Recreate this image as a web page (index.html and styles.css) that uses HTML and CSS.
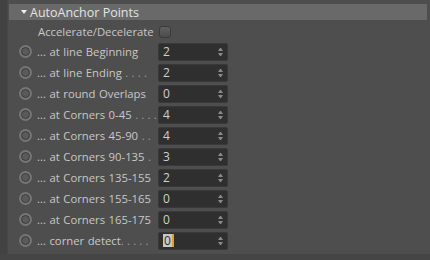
FILE: index.html
```html
<!DOCTYPE html>
<html>
<head>
<meta charset="utf-8">
<link rel="stylesheet" href="styles.css">
</head>
<body>
<div class="frame">
  <div class="leftbar"></div>
  <div class="panel">
    <div class="header"><span class="tri"></span><span class="title">AutoAnchor Points</span></div>
    <div class="accel">
      <span class="accel-label">Accelerate/Decelerate</span>
      <span class="check"></span>
    </div>
    <div class="rows">
      <div class="row"><span class="radio"></span><span class="label">... at line Beginning</span><span class="field"><span class="val">2</span><span class="spin"></span></span></div>
      <div class="row"><span class="radio"></span><span class="label">... at line Ending <span class="dots">. . . .</span></span><span class="field"><span class="val">2</span><span class="spin"></span></span></div>
      <div class="row"><span class="radio"></span><span class="label">... at round Overlaps</span><span class="field"><span class="val">0</span><span class="spin"></span></span></div>
      <div class="row"><span class="radio"></span><span class="label">... at Corners 0-45 <span class="dots">. . . .</span></span><span class="field"><span class="val">4</span><span class="spin"></span></span></div>
      <div class="row"><span class="radio"></span><span class="label">... at Corners 45-90 <span class="dots">. .</span></span><span class="field"><span class="val">4</span><span class="spin"></span></span></div>
      <div class="row"><span class="radio"></span><span class="label">... at Corners 90-135 <span class="dots">.</span></span><span class="field"><span class="val">3</span><span class="spin"></span></span></div>
      <div class="row"><span class="radio"></span><span class="label">... at Corners 135-155</span><span class="field"><span class="val">2</span><span class="spin"></span></span></div>
      <div class="row"><span class="radio"></span><span class="label">... at Corners 155-165</span><span class="field"><span class="val">0</span><span class="spin"></span></span></div>
      <div class="row"><span class="radio"></span><span class="label">... at Corners 165-175</span><span class="field"><span class="val">0</span><span class="spin"></span></span></div>
      <div class="row"><span class="radio"></span><span class="label">... corner detect<span class="dots">. . . . .</span></span><span class="field"><span class="val sel">0</span><span class="spin"></span></span></div>
    </div>
  </div>
</div>
<div class="bottom"></div>
</body>
</html>
```
FILE: styles.css
```css
html, body {
  margin: 0;
  padding: 0;
}
body {
  width: 430px;
  height: 260px;
  background: #4e4e4e;
  font-family: "Open Sans", "Liberation Sans", sans-serif;
  font-size: 11px;
  color: #c8c8c8;
  overflow: hidden;
  display: flex;
  flex-direction: column;
}
.frame {
  display: flex;
  height: 254px;
}
.leftbar {
  width: 7px;
  background: #424242;
  border-right: 1px solid #474747;
}
.panel {
  flex: 1;
  padding-top: 4px;
}
.header {
  height: 16px;
  margin: 0 3px 0 1px;
  background: #696969;
  display: flex;
  align-items: center;
  padding-left: 12px;
  gap: 3px;
  color: #e4e4e4;
  font-size: 12.5px;
  font-weight: 500;
}
.tri {
  width: 0;
  height: 0;
  border-left: 3.5px solid transparent;
  border-right: 3.5px solid transparent;
  border-top: 4px solid #f0f0f0;
}
.accel {
  height: 19px;
  margin-top: 2px;
  display: flex;
  align-items: center;
  padding-left: 30px;
  gap: 6px;
  font-size: 11.3px;
}
.accel-label {
  width: 115px;
}
.check {
  width: 10px;
  height: 10px;
  border-radius: 3px;
  background: linear-gradient(#606060, #4c4c4c);
  border: 1px solid #3a3a3a;
}
.rows {
  display: flex;
  flex-direction: column;
}
.row {
  height: 21px;
  display: grid;
  grid-template-columns: 13px 116px 70px;
  column-gap: 5px;
  align-items: center;
  padding-left: 11px;
}
.radio {
  width: 13px;
  height: 13px;
  border-radius: 50%;
  background: #767676;
  display: flex;
  align-items: center;
  justify-content: center;
}
.radio::after {
  content: "";
  width: 7px;
  height: 7px;
  border-radius: 50%;
  background: #5a5a5a;
  border: 1px solid #3c3c3c;
}
.label {
  white-space: nowrap;
  font-size: 11.3px;
  word-spacing: 0.6px;
}
.dots {
  color: #9c9c9c;
  word-spacing: 0.3px;
}
.field {
  height: 18px;
  background: #2f2f2f;
  border: 1px solid #393939;
  border-radius: 2px;
  display: flex;
  align-items: center;
  justify-content: space-between;
  padding: 0 4px 0 4px;
  box-sizing: border-box;
  color: #d0d0d0;
  font-size: 12px;
}
.val.sel {
  background: #c8c8c8;
  color: #303030;
  border-right: 2px solid #e8a020;
  padding: 0 1px;
  line-height: 13px;
}
.spin {
  display: flex;
  flex-direction: column;
  gap: 2px;
  width: 5px;
}
.spin::before {
  content: "";
  border-left: 2.5px solid transparent;
  border-right: 2.5px solid transparent;
  border-bottom: 3px solid #8a8a8a;
}
.spin::after {
  content: "";
  border-left: 2.5px solid transparent;
  border-right: 2.5px solid transparent;
  border-top: 3px solid #8a8a8a;
}
.bottom {
  height: 6px;
  background: #454545;
}
```
